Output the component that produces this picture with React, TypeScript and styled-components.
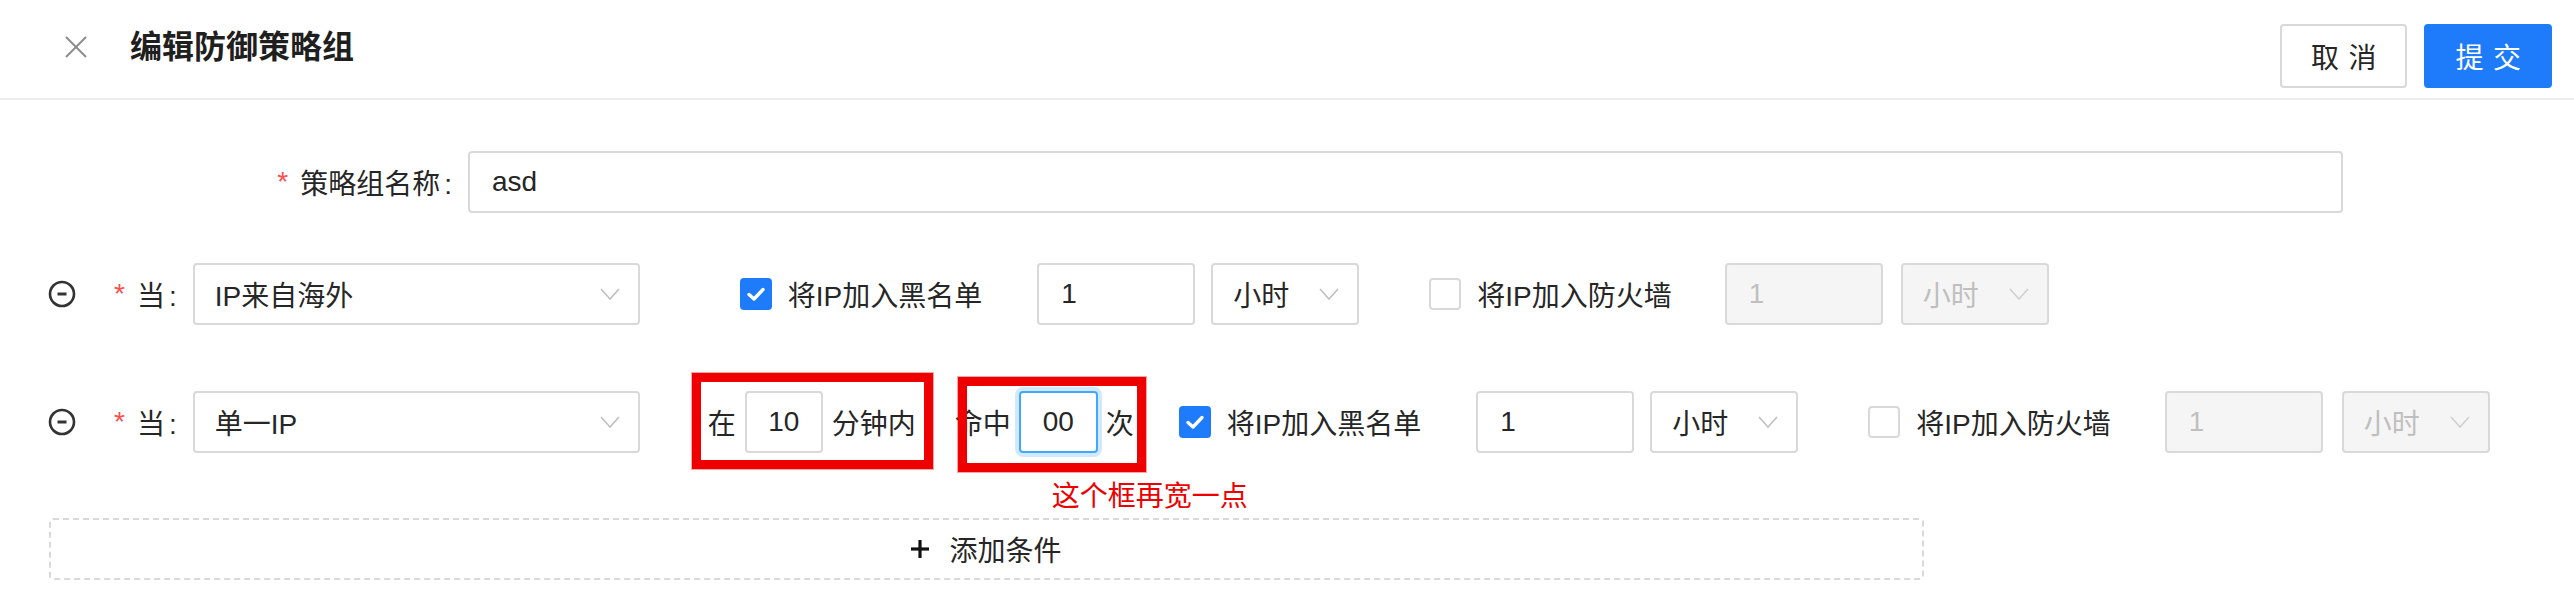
import React from "react";
import styled, { createGlobalStyle, css } from "styled-components";

const FONT = `"Liberation Sans", "Noto Sans CJK SC", "Noto Sans", sans-serif`;

const GlobalStyle = createGlobalStyle`
  html, body { margin: 0; padding: 0; background: #ffffff; }
  body {
    font-family: ${FONT};
    font-size: 28px;
    color: #333333;
  }
  * { box-sizing: border-box; }
`;

const Page = styled.div`
  width: 2574px;
  min-height: 608px;
  background: #fff;
`;

const Header = styled.header`
  display: flex;
  justify-content: space-between;
  align-items: flex-start;
  height: 100px;
  border-bottom: 2px solid #ebebeb;
  padding: 0 22px 0 65px;
`;

const HeaderLeft = styled.div`
  display: flex;
  align-items: center;
  gap: 43px;
  height: 94px;
`;

const Title = styled.h1`
  margin: 0;
  font-size: 32px;
  font-weight: 700;
  color: #1f1f1f;
  line-height: 1;
`;

const HeaderActions = styled.div`
  display: flex;
  gap: 17px;
  padding-top: 24px;
`;

const Button = styled.button<{ $primary?: boolean }>`
  height: 64px;
  padding: 0 29px;
  border-radius: 4px;
  font-family: ${FONT};
  font-size: 28px;
  white-space: nowrap;
  border: 2px solid #d9d9d9;
  background: #fff;
  color: #262626;
  cursor: pointer;
  ${(p) =>
    p.$primary &&
    css`
      background: #1e7bfa;
      border-color: #1e7bfa;
      color: #fff;
    `}
  & > span {
    display: inline-block;
    letter-spacing: 0.34em;
    margin-right: -0.34em;
  }
`;

const Form = styled.div`
  display: flex;
  flex-direction: column;
  padding-top: 51px;
`;

const NameRow = styled.div`
  display: flex;
  align-items: center;
  margin-bottom: 50px;
`;

const NameLabelCell = styled.div`
  width: 468px;
  flex-shrink: 0;
  display: flex;
  justify-content: flex-end;
  align-items: center;
`;

const Required = styled.span`
  color: #ff4d4f;
  font-family: "Liberation Sans", sans-serif;
  font-size: 28px;
  margin-right: 12px;
`;

const LabelText = styled.span`
  white-space: nowrap;
  color: #262626;
  &::after {
    content: ":";
    margin: 0 16px 0 4px;
  }
`;

const TextInput = styled.input<{
  $w: number;
  $ml?: number;
  $center?: boolean;
  $focused?: boolean;
}>`
  width: ${(p) => p.$w}px;
  margin-left: ${(p) => p.$ml ?? 0}px;
  flex-shrink: 0;
  height: 62px;
  border: 2px solid #d9d9d9;
  border-radius: 4px;
  padding: 0 22px;
  font-family: ${FONT};
  font-size: 28px;
  color: #262626;
  background: #fff;
  outline: none;
  ${(p) =>
    p.$center &&
    css`
      padding: 0;
      text-align: center;
    `}
  ${(p) =>
    p.$focused &&
    css`
      border-color: #40a9ff;
      box-shadow: 0 0 0 4px rgba(24, 144, 255, 0.2);
    `}
  &:disabled {
    background: #f5f5f5;
    color: #bfbfbf;
  }
`;

const SelectBox = styled.div<{ $w: number; $ml?: number; $disabled?: boolean }>`
  width: ${(p) => p.$w}px;
  margin-left: ${(p) => p.$ml ?? 0}px;
  flex-shrink: 0;
  height: 62px;
  border: 2px solid #d9d9d9;
  border-radius: 4px;
  padding: 0 18px 0 20px;
  display: flex;
  align-items: center;
  justify-content: space-between;
  background: ${(p) => (p.$disabled ? "#f5f5f5" : "#fff")};
  color: ${(p) => (p.$disabled ? "#bfbfbf" : "#262626")};
  white-space: nowrap;
`;

const Chevron = styled.svg<{ $disabled?: boolean }>`
  width: 20px;
  height: 12px;
  flex-shrink: 0;
  polyline {
    fill: none;
    stroke: ${(p) => (p.$disabled ? "#d0d0d0" : "#bfbfbf")};
    stroke-width: 1.6;
  }
`;

const RuleRow = styled.div<{ $mb: number }>`
  display: flex;
  align-items: center;
  margin-bottom: ${(p) => p.$mb}px;
`;

const RemoveIcon = styled.svg`
  width: 28px;
  height: 28px;
  margin-left: 48px;
  margin-right: 38px;
  flex-shrink: 0;
`;

const CheckOption = styled.label<{ $ml: number }>`
  display: flex;
  align-items: center;
  gap: 16px;
  margin-left: ${(p) => p.$ml}px;
  flex-shrink: 0;
  white-space: nowrap;
  color: #262626;
`;

const CheckBox = styled.span<{ $checked?: boolean }>`
  width: 32px;
  height: 32px;
  border-radius: 4px;
  display: flex;
  align-items: center;
  justify-content: center;
  border: 2px solid ${(p) => (p.$checked ? "#1e7bfa" : "#d9d9d9")};
  background: ${(p) => (p.$checked ? "#1e7bfa" : "#fff")};
`;

const AnnotatedGroup = styled.div<{
  $ml: number;
  $gap: number;
  $frame: [number, number, number, number];
}>`
  position: relative;
  display: flex;
  align-items: center;
  gap: ${(p) => p.$gap}px;
  margin-left: ${(p) => p.$ml}px;
  flex-shrink: 0;
  white-space: nowrap;
  &::after {
    content: "";
    position: absolute;
    top: ${(p) => p.$frame[0]}px;
    right: ${(p) => p.$frame[1]}px;
    bottom: ${(p) => p.$frame[2]}px;
    left: ${(p) => p.$frame[3]}px;
    border: 9px solid #ee0000;
    box-shadow: 0 0 0 1px rgba(238, 0, 0, 0.35);
    pointer-events: none;
  }
`;

const Word = styled.span`
  color: #262626;
`;

const Note = styled.span`
  position: absolute;
  left: 97px;
  top: 92px;
  color: #ee0000;
  font-size: 28px;
  line-height: 1;
  white-space: nowrap;
`;

const AddButton = styled.div`
  margin-left: 49px;
  width: 1875px;
  height: 62px;
  border: 2px dashed #d9d9d9;
  border-radius: 4px;
  display: flex;
  align-items: center;
  justify-content: center;
  gap: 20px;
  color: #262626;
`;

const Select = ({
  value,
  w,
  ml,
  disabled,
}: {
  value: string;
  w: number;
  ml?: number;
  disabled?: boolean;
}) => (
  <SelectBox $w={w} $ml={ml} $disabled={disabled}>
    <span>{value}</span>
    <Chevron viewBox="0 0 20 12" $disabled={disabled}>
      <polyline points="1,1 10,11 19,1" />
    </Chevron>
  </SelectBox>
);

const Check = ({ checked, label, ml }: { checked?: boolean; label: string; ml: number }) => (
  <CheckOption $ml={ml}>
    <CheckBox $checked={checked}>
      {checked && (
        <svg width="20" height="16" viewBox="0 0 20 16">
          <polyline
            points="3,8.5 8,13 17,3.5"
            fill="none"
            stroke="#fff"
            strokeWidth="3.4"
            strokeLinecap="round"
            strokeLinejoin="round"
          />
        </svg>
      )}
    </CheckBox>
    <span>{label}</span>
  </CheckOption>
);

const Remove = () => (
  <RemoveIcon viewBox="0 0 28 28">
    <circle cx="14" cy="14" r="12" fill="none" stroke="#333" strokeWidth="2.6" />
    <line x1="9.5" y1="14" x2="18.5" y2="14" stroke="#333" strokeWidth="3" />
  </RemoveIcon>
);

const RowLabel = () => (
  <>
    <Required>*</Required>
    <LabelText>当</LabelText>
  </>
);

export default function App() {
  return (
    <Page>
      <GlobalStyle />
      <Header>
        <HeaderLeft>
          <svg width="22" height="22" viewBox="0 0 22 22">
            <line x1="1" y1="1" x2="21" y2="21" stroke="#8c8c8c" strokeWidth="2" />
            <line x1="21" y1="1" x2="1" y2="21" stroke="#8c8c8c" strokeWidth="2" />
          </svg>
          <Title>编辑防御策略组</Title>
        </HeaderLeft>
        <HeaderActions>
          <Button>
            <span>取消</span>
          </Button>
          <Button $primary>
            <span>提交</span>
          </Button>
        </HeaderActions>
      </Header>

      <Form>
        <NameRow>
          <NameLabelCell>
            <Required>*</Required>
            <LabelText>策略组名称</LabelText>
          </NameLabelCell>
          <TextInput $w={1875} readOnly value="asd" />
        </NameRow>

        <RuleRow $mb={66}>
          <Remove />
          <RowLabel />
          <Select value="IP来自海外" w={447} />
          <Check checked label="将IP加入黑名单" ml={100} />
          <TextInput $w={158} $ml={55} readOnly value="1" />
          <Select value="小时" w={148} ml={16} />
          <Check label="将IP加入防火墙" ml={70} />
          <TextInput $w={158} $ml={53} disabled value="1" />
          <Select value="小时" w={148} ml={18} disabled />
        </RuleRow>

        <RuleRow $mb={65}>
          <Remove />
          <RowLabel />
          <Select value="单一IP" w={447} />
          <AnnotatedGroup $ml={68} $gap={9} $frame={[-18, -17, -16, -16]}>
            <Word>在</Word>
            <TextInput $w={78} $center readOnly value="10" />
            <Word>分钟内</Word>
          </AnnotatedGroup>
          <AnnotatedGroup $ml={39} $gap={8} $frame={[-14, -12, -19, 3]}>
            <Word>命中</Word>
            <TextInput $w={79} $center $focused readOnly value="00" />
            <Word>次</Word>
            <Note>这个框再宽一点</Note>
          </AnnotatedGroup>
          <Check checked label="将IP加入黑名单" ml={45} />
          <TextInput $w={158} $ml={55} readOnly value="1" />
          <Select value="小时" w={148} ml={16} />
          <Check label="将IP加入防火墙" ml={70} />
          <TextInput $w={158} $ml={54} disabled value="1" />
          <Select value="小时" w={148} ml={19} disabled />
        </RuleRow>

        <AddButton>
          <svg width="18" height="18" viewBox="0 0 18 18">
            <line x1="9" y1="0" x2="9" y2="18" stroke="#111" strokeWidth="3.2" />
            <line x1="0" y1="9" x2="18" y2="9" stroke="#111" strokeWidth="3.2" />
          </svg>
          <span>添加条件</span>
        </AddButton>
      </Form>
    </Page>
  );
}
